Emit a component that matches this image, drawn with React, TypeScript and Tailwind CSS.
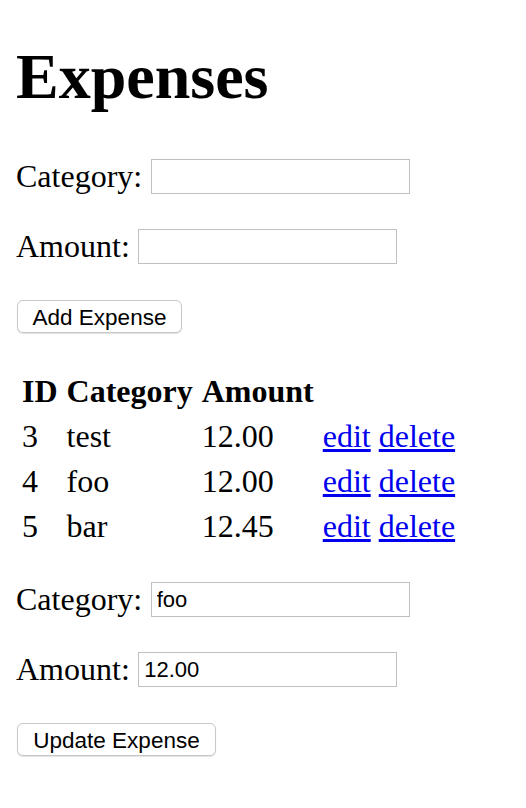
import { useState } from "react";

type Expense = { id: number; category: string; amount: string };

const serif = "font-['Liberation_Serif','Times_New_Roman',serif]";
const sans = "font-['Liberation_Sans',Arial,sans-serif]";

function Field({ label, value, className }: { label: string; value: string; className: string }) {
  return (
    <div className={`flex h-[35px] items-center gap-[8.5px] ${className}`}>
      <span className="leading-[37px]">{label}</span>
      <input
        readOnly
        value={value}
        className={`${sans} h-[35px] w-[259px] border border-[#c0c0c0] px-[5px] text-[22px] text-black outline-none`}
      />
    </div>
  );
}

function Btn({ children, className }: { children: string; className: string }) {
  return (
    <button
      className={`${sans} ml-[1px] block h-[33px] rounded-[6px] border border-[#c8c8c8] bg-white pt-[3px] text-[22.5px] leading-none text-black shadow-[0_1px_1px_rgba(0,0,0,0.12)] ${className}`}
    >
      {children}
    </button>
  );
}

export default function App() {
  const [expenses] = useState<Expense[]>([
    { id: 3, category: "test", amount: "12.00" },
    { id: 4, category: "foo", amount: "12.00" },
    { id: 5, category: "bar", amount: "12.45" },
  ]);

  const cell = "pl-[2px] pr-[3px] py-[2px] text-left";

  return (
    <div className={`${serif} min-h-[808px] bg-white px-[16px] pt-[16px] text-[32px] text-black`}>
      <h1 className="mt-[24px] text-[64px] font-bold leading-[74px]">Expenses</h1>

      <form className="mt-[45px]">
        <Field label="Category:" value="" className="" />
        <Field label="Amount:" value="" className="mt-[35px]" />
        <Btn className="mt-[36px] w-[165px]">Add Expense</Btn>
      </form>

      <table className="mt-[34px] border-separate border-spacing-[4px] leading-[37px]">
        <thead>
          <tr>
            <th className={`${cell} font-bold`}>ID</th>
            <th className={`${cell} font-bold`}>Category</th>
            <th className={`${cell} font-bold`}>Amount</th>
            <th className={cell}></th>
          </tr>
        </thead>
        <tbody>
          {expenses.map((e) => (
            <tr key={e.id}>
              <td className={cell}>{e.id}</td>
              <td className={cell}>{e.category}</td>
              <td className={cell}>{e.amount}</td>
              <td className={cell}>
                <a href="#" className="text-[#0000ee] underline">edit</a>{" "}
                <a href="#" className="text-[#0000ee] underline">delete</a>
              </td>
            </tr>
          ))}
        </tbody>
      </table>

      <form className="mt-[31px]">
        <Field label="Category:" value="foo" className="" />
        <Field label="Amount:" value="12.00" className="mt-[35px]" />
        <Btn className="mt-[36px] w-[199px]">Update Expense</Btn>
      </form>
    </div>
  );
}
